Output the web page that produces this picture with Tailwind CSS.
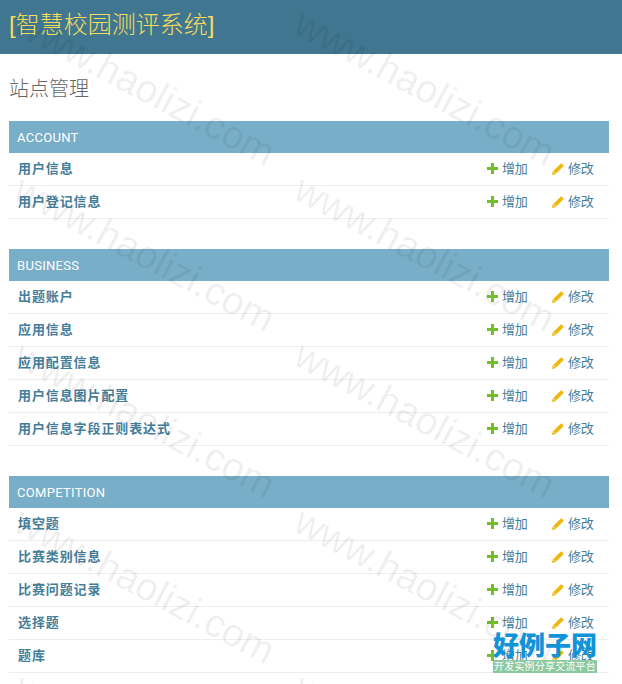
<!DOCTYPE html>
<html lang="zh-CN">
<head>
    <meta charset="UTF-8">
    <title>站点管理</title>
    <script src="https://cdn.jsdelivr.net/npm/@tailwindcss/browser@4"></script>
</head>
<body class="bg-white h-[684px] w-[622px] overflow-hidden relative font-['Liberation_Sans','Noto_Sans_CJK_SC',sans-serif]">

<!-- Header -->
<div class="h-[54px] bg-[#417690] pl-[9px] flex items-center">
    <span class="text-[24px] text-[#f5dd5d] font-light leading-none -mt-[4px]">[智慧校园测评系统]</span>
</div>

<!-- Content -->
<div class="pl-[9px] pr-[13px]">
    <h1 class="text-[20px] font-light text-[#666] leading-[26px] mt-[22px] mb-[19px]">站点管理</h1>
    <div id="modules"></div>
</div>

<!-- Watermark -->
<div class="absolute inset-0 overflow-hidden pointer-events-none text-[39px] leading-none text-black/7 whitespace-nowrap">
    <span class="absolute left-[1px] top-[68px] rotate-[28deg]">www.haolizi.com</span>
    <span class="absolute left-[1px] top-[234px] rotate-[28deg]">www.haolizi.com</span>
    <span class="absolute left-[1px] top-[400px] rotate-[28deg]">www.haolizi.com</span>
    <span class="absolute left-[1px] top-[566px] rotate-[28deg]">www.haolizi.com</span>
    <span class="absolute left-[1px] top-[732px] rotate-[28deg]">www.haolizi.com</span>
    <span class="absolute left-[281px] top-[68px] rotate-[28deg]">www.haolizi.com</span>
    <span class="absolute left-[281px] top-[234px] rotate-[28deg]">www.haolizi.com</span>
    <span class="absolute left-[281px] top-[400px] rotate-[28deg]">www.haolizi.com</span>
    <span class="absolute left-[281px] top-[566px] rotate-[28deg]">www.haolizi.com</span>
    <span class="absolute left-[281px] top-[732px] rotate-[28deg]">www.haolizi.com</span>
</div>

<!-- Corner logo -->
<div class="absolute left-[493px] top-[632px] w-[104px] text-center">
    <div class="text-[26px] leading-[28px] font-black text-[#1293d8] whitespace-nowrap">好例子网</div>
    <div class="bg-[#8cc9a1] text-white text-[10px] leading-[13px] tracking-[0.2px] whitespace-nowrap">开发实例分享交流平台</div>
</div>

<script>
    const modules = [
        { name: 'ACCOUNT', items: ['用户信息', '用户登记信息'] },
        { name: 'BUSINESS', items: ['出题账户', '应用信息', '应用配置信息', '用户信息图片配置', '用户信息字段正则表达式'] },
        { name: 'COMPETITION', items: ['填空题', '比赛类别信息', '比赛问题记录', '选择题', '题库'] },
    ];

    const plusIcon = `<svg width="11" height="11" viewBox="0 0 11 11"><path d="M4 0h3v4h4v3H7v4H4V7H0V4h4z" fill="#70bf2b"/></svg>`;
    const pencilIcon = `<svg width="12" height="12" viewBox="0 0 12 12"><path d="M0 12l.8-3.4L8.6.8a1 1 0 0 1 1.4 0l1.2 1.2a1 1 0 0 1 0 1.4L3.4 11.2z" fill="#efb80b"/><path d="M1.6 8.6l1.8 1.8" stroke="#fff" stroke-width=".8"/></svg>`;

    function createRow(title) {
        return `
        <div class="h-[33px] border-b border-[#eee] flex items-center text-[13px] text-[#447e9b]">
            <span class="flex-1 pl-[9px] font-bold tracking-[0.9px]">${title}</span>
            <span class="w-[65px] flex items-center gap-[4px] tracking-[-0.3px]"><span class="-mt-[1px]">${plusIcon}</span>增加</span>
            <span class="w-[57px] flex items-center gap-[4px] tracking-[-0.3px]">${pencilIcon}修改</span>
        </div>`;
    }

    document.getElementById('modules').innerHTML = modules.map(m => `
        <div class="mb-[30px] last:mb-0">
            <div class="h-[32px] bg-[#79aec8] text-white text-[13px] pl-[8px] leading-[33px] tracking-[0.3px] font-['Roboto','Noto_Sans_CJK_SC',sans-serif]">${m.name}</div>
            ${m.items.map(createRow).join('')}
        </div>`).join('');
</script>
</body>
</html>
